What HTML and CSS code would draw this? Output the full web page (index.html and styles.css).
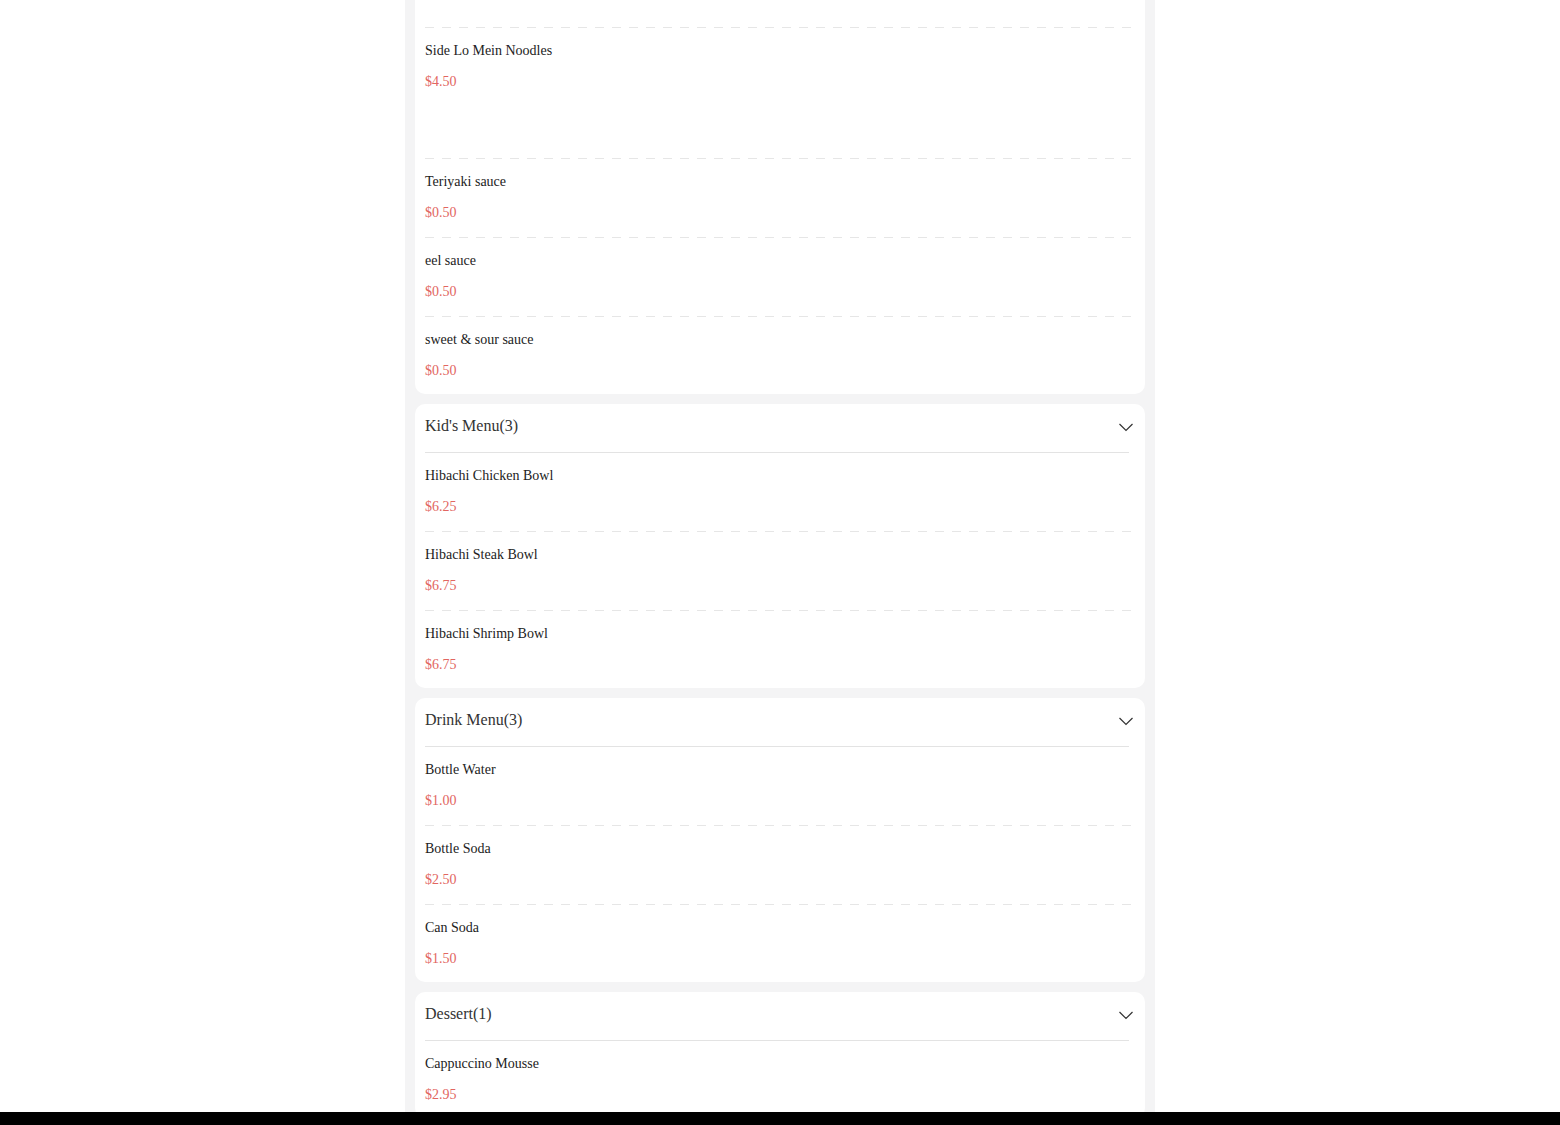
FILE: index.html
```html
<!DOCTYPE html>
<html lang="en">
<head>
<meta charset="utf-8">
<title>Menu</title>
<link rel="stylesheet" href="styles.css">
</head>
<body>
<div class="page">
  <section class="card card--cut">
    <div class="card-top-space"></div>
    <div class="item item--dashed">
      <div class="item-name">Side Lo Mein Noodles</div>
      <div class="item-price">$4.50</div>
      <div class="item-extra"></div>
    </div>
    <div class="item item--dashed">
      <div class="item-name">Teriyaki sauce</div>
      <div class="item-price">$0.50</div>
    </div>
    <div class="item item--dashed">
      <div class="item-name">eel sauce</div>
      <div class="item-price">$0.50</div>
    </div>
    <div class="item item--dashed">
      <div class="item-name">sweet &amp; sour sauce</div>
      <div class="item-price">$0.50</div>
    </div>
  </section>

  <section class="card">
    <div class="card-head">
      <span class="card-title">Kid's Menu(3)</span>
      <svg class="chevron" width="16" height="10" viewBox="0 0 16 10"><polyline points="1.5,2 8,8.5 14.5,2" fill="none" stroke="#333" stroke-width="1.2"/></svg>
    </div>
    <div class="item">
      <div class="item-name">Hibachi Chicken Bowl</div>
      <div class="item-price">$6.25</div>
    </div>
    <div class="item item--dashed">
      <div class="item-name">Hibachi Steak Bowl</div>
      <div class="item-price">$6.75</div>
    </div>
    <div class="item item--dashed">
      <div class="item-name">Hibachi Shrimp Bowl</div>
      <div class="item-price">$6.75</div>
    </div>
  </section>

  <section class="card">
    <div class="card-head">
      <span class="card-title">Drink Menu(3)</span>
      <svg class="chevron" width="16" height="10" viewBox="0 0 16 10"><polyline points="1.5,2 8,8.5 14.5,2" fill="none" stroke="#333" stroke-width="1.2"/></svg>
    </div>
    <div class="item">
      <div class="item-name">Bottle Water</div>
      <div class="item-price">$1.00</div>
    </div>
    <div class="item item--dashed">
      <div class="item-name">Bottle Soda</div>
      <div class="item-price">$2.50</div>
    </div>
    <div class="item item--dashed">
      <div class="item-name">Can Soda</div>
      <div class="item-price">$1.50</div>
    </div>
  </section>

  <section class="card">
    <div class="card-head">
      <span class="card-title">Dessert(1)</span>
      <svg class="chevron" width="16" height="10" viewBox="0 0 16 10"><polyline points="1.5,2 8,8.5 14.5,2" fill="none" stroke="#333" stroke-width="1.2"/></svg>
    </div>
    <div class="item">
      <div class="item-name">Cappuccino Mousse</div>
      <div class="item-price">$2.95</div>
    </div>
  </section>
</div>
<div class="bottom-bar"></div>
</body>
</html>
```

FILE: styles.css
```css
html, body {
  margin: 0;
  padding: 0;
  background: #ffffff;
}

body {
  font-family: "Liberation Serif", "Times New Roman", serif;
  color: #222;
}

.page {
  width: 750px;
  margin: 0 auto;
  padding: 0 10px 60px;
  box-sizing: border-box;
  background: #f4f4f5;
  min-height: 100vh;
  display: flex;
  flex-direction: column;
  gap: 10px;
}

.card {
  background: #ffffff;
  border-radius: 10px;
  padding: 0 10px;
}

.card--cut {
  border-top-left-radius: 0;
  border-top-right-radius: 0;
}

.card-top-space {
  height: 27px;
}

.card-head {
  display: flex;
  align-items: center;
  justify-content: space-between;
  padding: 11px 0 15px;
  margin-right: 6px;
  border-bottom: 1px solid #e3e3e3;
  position: relative;
}

.card-title {
  font-size: 16px;
  line-height: 22px;
  color: #333;
}

.chevron {
  position: absolute;
  right: -5px;
  top: 18px;
}

.item {
  padding: 13px 0 14px;
}

.item:last-child {
  padding-bottom: 13px;
}

.item--dashed {
  padding-top: 14px;
  background-image: linear-gradient(to right, #e6e6e6 0 9px, transparent 9px 17px);
  background-size: 17px 1px;
  background-repeat: repeat-x;
  background-position: 0 0;
}

.item-name {
  font-size: 14px;
  line-height: 20px;
  color: #222;
  margin-bottom: 11px;
}

.item-price {
  font-size: 14px;
  line-height: 20px;
  color: #e26661;
}

.item-extra {
  height: 52px;
}

.bottom-bar {
  position: fixed;
  left: 0;
  right: 0;
  bottom: 0;
  height: 13px;
  background: #000;
}
```
